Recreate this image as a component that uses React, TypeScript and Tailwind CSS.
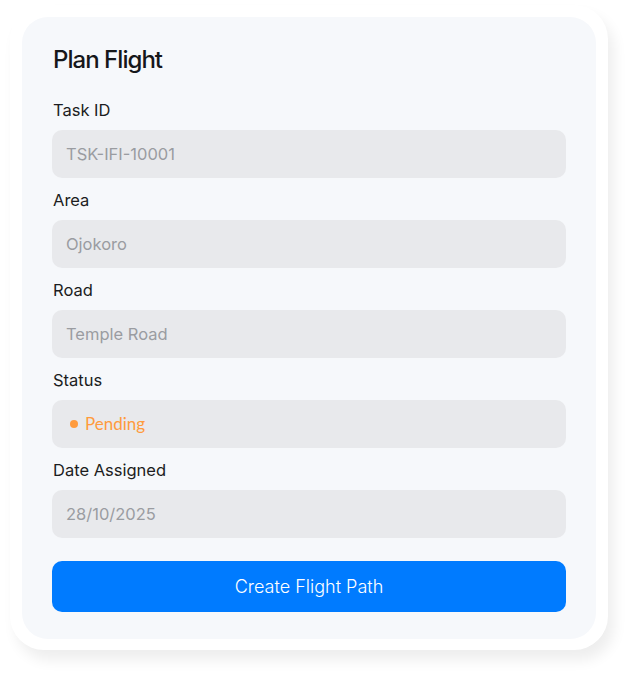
import React from "react";

const fields = [
  { label: "Task ID", value: "TSK-IFI-10001" },
  { label: "Area", value: "Ojokoro" },
  { label: "Road", value: "Temple Road" },
];

const Field = ({ label, children }: { label: string; children: React.ReactNode }) => (
  <div className="flex flex-col gap-2">
    <label className="pl-px text-[16.5px] leading-6 text-[#1c1d21]">{label}</label>
    <div className="h-12 rounded-[10px] bg-[#e8e9ec] px-[14px] flex items-center text-[16.5px]">
      {children}
    </div>
  </div>
);

const App = () => {
  return (
    <div className="min-h-screen bg-white pt-[5px] pl-[10px] font-['Inter',sans-serif]">
      <div className="w-[598px] rounded-[34px] bg-white p-[12px] pb-[11px] shadow-[6px_10px_14px_rgba(0,0,0,0.07)]">
        <div className="rounded-[26px] bg-[#f6f8fb] px-[30px] pt-[27px] pb-[27px]">
          <h1 className="pl-px text-[24px] leading-8 font-medium tracking-[-0.04em] text-[#16171a] mb-[22px]">
            Plan Flight
          </h1>
          <div className="flex flex-col gap-[10px]">
            {fields.map((f) => (
              <Field key={f.label} label={f.label}>
                <span className="text-[#9a9ca1]">{f.value}</span>
              </Field>
            ))}
            <Field label="Status">
              <span className="ml-[4px] flex items-center gap-[7px] text-[#ff9b3d] font-['Lato',sans-serif] text-[17px]">
                <span className="h-[8px] w-[8px] rounded-full bg-[#ff9b3d]" />
                Pending
              </span>
            </Field>
            <Field label="Date Assigned">
              <span className="text-[#9a9ca1]">28/10/2025</span>
            </Field>
          </div>
          <button className="mt-[23px] h-[51px] w-full rounded-[10px] bg-[#007bff] text-[18px] font-light text-white">
            Create Flight Path
          </button>
        </div>
      </div>
    </div>
  );
};

export default App;
